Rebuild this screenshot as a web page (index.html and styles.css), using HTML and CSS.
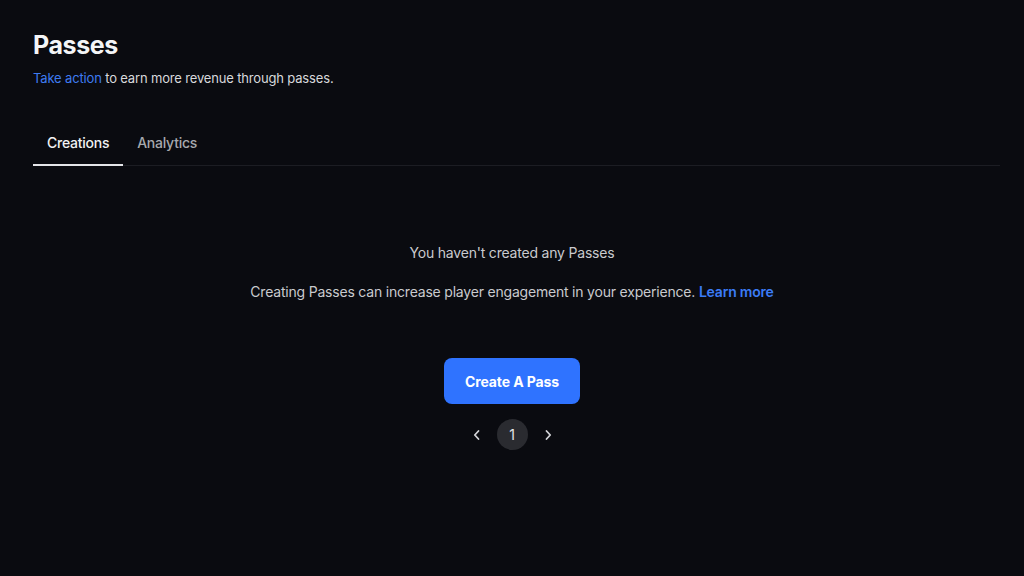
FILE: index.html
```html
<!DOCTYPE html>
<html lang="en">
<head>
<meta charset="utf-8">
<title>Passes</title>
<link rel="stylesheet" href="styles.css">
</head>
<body>
<main class="page">
  <header class="head">
    <h1 class="title">Passes</h1>
    <p class="subtitle"><a class="link" href="#">Take action</a> to earn more revenue through passes.</p>
  </header>

  <nav class="tabs">
    <a class="tab tab-active" href="#">Creations</a>
    <a class="tab" href="#">Analytics</a>
  </nav>

  <section class="empty">
    <p class="empty-title">You haven't created any Passes</p>
    <p class="empty-text">Creating Passes can increase player engagement in your experience. <a class="link link-bold" href="#">Learn more</a></p>
    <button class="btn-primary" type="button">Create A Pass</button>
    <div class="pager">
      <button class="pager-arrow" type="button" aria-label="Previous page">
        <svg width="10" height="12" viewBox="0 0 10 12"><path d="M6.5 2 L2.8 6 L6.5 10" fill="none" stroke="currentColor" stroke-width="1.8" stroke-linecap="round" stroke-linejoin="round"/></svg>
      </button>
      <span class="pager-page">1</span>
      <button class="pager-arrow" type="button" aria-label="Next page">
        <svg width="10" height="12" viewBox="0 0 10 12"><path d="M3.5 2 L7.2 6 L3.5 10" fill="none" stroke="currentColor" stroke-width="1.8" stroke-linecap="round" stroke-linejoin="round"/></svg>
      </button>
    </div>
  </section>
</main>
</body>
</html>
```

FILE: styles.css
```css
* { box-sizing: border-box; }

html, body {
  margin: 0;
  height: 100%;
  background: #0a0b10;
}

body {
  font-family: Inter, "Noto Sans", "Liberation Sans", sans-serif;
  color: #e6e7ea;
}

.page {
  padding: 28px 24px 0 33px;
  width: 1024px;
}

.head { margin: 0; }

.title {
  margin: 0;
  font-size: 25px;
  font-weight: 700;
  line-height: 34px;
  color: #f4f5f7;
  letter-spacing: -0.4px;
}

.subtitle {
  margin: 7px 0 0;
  font-size: 13px;
  line-height: 18px;
  color: #d8d9dc;
  letter-spacing: -0.16px;
}

.link {
  color: #3e7bf0;
  text-decoration: none;
}

.link-bold {
  font-weight: 600;
  color: #3b7cf6;
}

.tabs {
  display: flex;
  margin-top: 45px;
  width: 967px;
  border-bottom: 1px solid #1c1d23;
}

.tab {
  padding: 1px 14px 11px;
  font-size: 14px;
  line-height: 20px;
  font-weight: 500;
  color: #a7a9ae;
  text-decoration: none;
  letter-spacing: -0.25px;
  margin-bottom: -1px;
  border-bottom: 2px solid transparent;
}

.tab-active {
  color: #f1f2f4;
  border-bottom-color: #e4e5e8;
}

.empty {
  display: flex;
  flex-direction: column;
  align-items: center;
  width: 958px;
  padding-top: 77px;
}

.empty-title {
  margin: 0;
  font-size: 14px;
  line-height: 20px;
  color: #c9cace;
  letter-spacing: -0.2px;
}

.empty-text {
  margin: 19px 0 0;
  font-size: 14px;
  line-height: 20px;
  color: #c9cace;
  letter-spacing: -0.2px;
}

.btn-primary {
  margin-top: 56px;
  width: 136px;
  height: 46px;
  border: 0;
  border-radius: 8px;
  background: #2f73ff;
  color: #ffffff;
  font-family: inherit;
  font-size: 14px;
  font-weight: 700;
  letter-spacing: -0.1px;
}

.pager {
  display: flex;
  align-items: center;
  gap: 13px;
  margin-top: 15px;
}

.pager-arrow {
  display: flex;
  align-items: center;
  justify-content: center;
  width: 14px;
  height: 30px;
  padding: 0;
  border: 0;
  background: none;
  color: #d2d3d7;
}

.pager-page {
  display: flex;
  align-items: center;
  justify-content: center;
  width: 31px;
  height: 31px;
  border-radius: 50%;
  background: #2a2b30;
  font-size: 14px;
  color: #e3e4e7;
}
```
